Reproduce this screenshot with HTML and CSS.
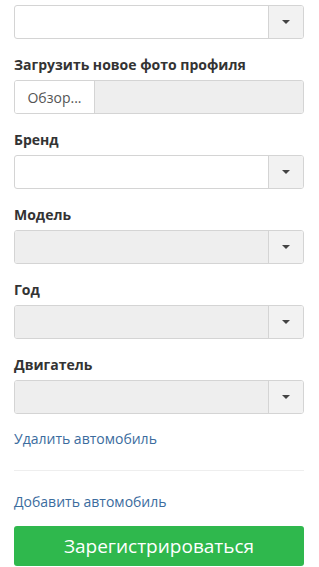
FILE: index.html
```html
<!DOCTYPE html>
<html lang="ru">
<head>
<meta charset="utf-8">
<link rel="stylesheet" href="styles.css">
</head>
<body>
<form class="form">
  <div class="group first">
    <div class="select"><span class="value"></span><span class="arrow"><span class="caret"></span></span></div>
  </div>
  <div class="group">
    <label class="label">Загрузить новое фото профиля</label>
    <div class="file"><span class="browse">Обзор...</span><span class="filename"></span></div>
  </div>
  <div class="group">
    <label class="label">Бренд</label>
    <div class="select"><span class="value"></span><span class="arrow"><span class="caret"></span></span></div>
  </div>
  <div class="group">
    <label class="label">Модель</label>
    <div class="select disabled"><span class="value"></span><span class="arrow"><span class="caret"></span></span></div>
  </div>
  <div class="group">
    <label class="label">Год</label>
    <div class="select disabled"><span class="value"></span><span class="arrow"><span class="caret"></span></span></div>
  </div>
  <div class="group">
    <label class="label">Двигатель</label>
    <div class="select disabled"><span class="value"></span><span class="arrow"><span class="caret"></span></span></div>
  </div>
  <a class="link remove" href="#">Удалить автомобиль</a>
  <hr class="divider">
  <a class="link add" href="#">Добавить автомобиль</a>
  <button class="submit" type="button">Зарегистрироваться</button>
</form>
</body>
</html>
```
FILE: styles.css
```css
html, body {
  margin: 0;
  padding: 0;
  background: #fff;
}
body {
  font-family: "Open Sans", "Liberation Sans", sans-serif;
  color: #333;
  font-size: 14px;
}
.form {
  padding: 5px 15px 0 14px;
  display: flex;
  flex-direction: column;
}
.group {
  margin-bottom: 15px;
}
.label {
  display: block;
  font-weight: 700;
  font-size: 14px;
  line-height: 21px;
  margin-bottom: 5px;
  color: #333;
}
.select {
  display: flex;
  height: 34px;
  box-sizing: border-box;
  border: 1px solid #d4d4d4;
  border-radius: 3px;
  background: #fff;
  overflow: hidden;
}
.select .value {
  flex: 1;
}
.select.disabled .value {
  background: #eee;
}
.arrow {
  width: 34px;
  border-left: 1px solid #d4d4d4;
  background: #f2f2f2;
  display: flex;
  align-items: center;
  justify-content: center;
}
.caret {
  width: 0;
  height: 0;
  border-left: 4px solid transparent;
  border-right: 4px solid transparent;
  border-top: 4px solid #444;
}
.file {
  display: flex;
  height: 34px;
  box-sizing: border-box;
  border: 1px solid #d4d4d4;
  border-radius: 3px;
  overflow: hidden;
}
.browse {
  width: 79px;
  border-right: 1px solid #d4d4d4;
  background: #fff;
  display: flex;
  align-items: center;
  justify-content: center;
  font-size: 14px;
  color: #555;
}
.filename {
  flex: 1;
  background: #eee;
}
.link {
  color: #3b6c9e;
  text-decoration: none;
  font-size: 14px;
  line-height: 19px;
  align-self: flex-start;
}
.divider {
  width: 100%;
  border: 0;
  border-top: 1px solid #eee;
  margin: 22px 0 21px;
}
.submit {
  margin-top: 15px;
  height: 40px;
  border: 0;
  border-radius: 3px;
  background: #2fb84d;
  color: #fff;
  font-family: "Open Sans", "Liberation Sans", sans-serif;
  font-size: 19px;
  width: 100%;
}
```
